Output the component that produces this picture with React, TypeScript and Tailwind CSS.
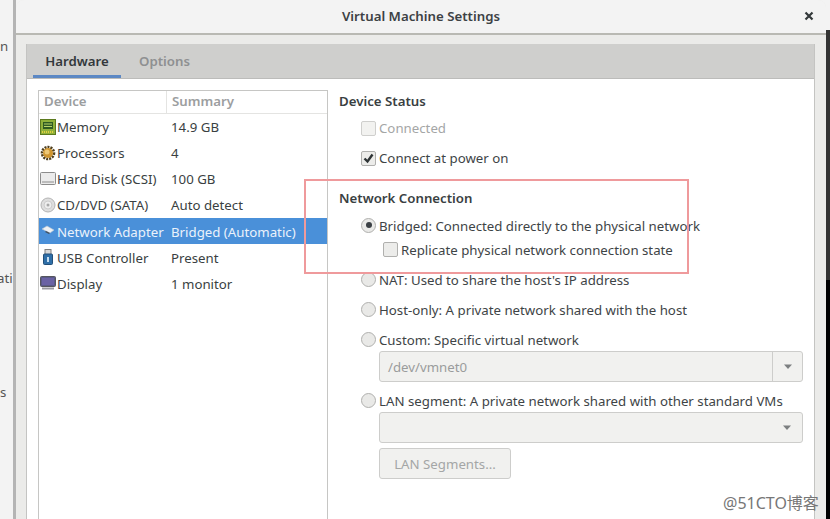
const font = { fontFamily: '"Noto Sans", "Noto Sans CJK SC", sans-serif' };

const MemoryIcon = () => (
  <svg width="16" height="16" viewBox="0 0 16 16">
    <rect x="0.5" y="0.5" width="15" height="15" fill="#8fb03a" stroke="#5c7a1e" />
    <rect x="3" y="3" width="10" height="7" fill="#2f5a22" />
    <path d="M4 5h8M4 7.5h8" stroke="#b8d468" />
    <path d="M2 13h12" stroke="#e0d040" strokeWidth="2" strokeDasharray="1 1" />
  </svg>
);

const ProcessorIcon = () => (
  <svg width="16" height="16" viewBox="0 0 16 16">
    <circle cx="8" cy="8" r="6" fill="none" stroke="#4f3e1c" strokeWidth="2.6" strokeDasharray="2 1" />
    <circle cx="8" cy="8" r="5" fill="#cf9530" />
    <circle cx="7" cy="7" r="2.5" fill="#eec877" />
  </svg>
);

const DiskIcon = () => (
  <svg width="16" height="16" viewBox="0 0 16 16">
    <rect x="0.5" y="1.5" width="15" height="12" rx="1" fill="#ebebeb" stroke="#8c8c8c" />
    <rect x="2" y="10" width="12" height="2" fill="#bcbcbc" />
  </svg>
);

const CdIcon = () => (
  <svg width="16" height="16" viewBox="0 0 16 16">
    <circle cx="8" cy="8" r="7" fill="#dedede" stroke="#b4b4b4" />
    <circle cx="8" cy="8" r="4" fill="#eeeeee" stroke="#cccccc" />
    <circle cx="8" cy="8" r="1.5" fill="#a8a8a8" />
  </svg>
);

const NetworkIcon = () => (
  <svg width="16" height="16" viewBox="0 0 16 16">
    <path d="M2 6l5-3 7 4-4 3z" fill="#eef1f4" stroke="#b8c4d0" strokeWidth="0.6" />
    <path d="M6 8l4 2-1 1-4-2z" fill="#44505c" />
  </svg>
);

const UsbIcon = () => (
  <svg width="16" height="16" viewBox="0 0 16 16">
    <rect x="5" y="0.5" width="6" height="5" fill="#d8d8d8" stroke="#808080" />
    <rect x="3.5" y="5" width="9" height="10.5" rx="1" fill="#2f6fa8" stroke="#234f78" />
    <rect x="7" y="8" width="2" height="5" fill="#c4dcf0" />
  </svg>
);

const DisplayIcon = () => (
  <svg width="16" height="16" viewBox="0 0 16 16">
    <rect x="0.5" y="1.5" width="15" height="10" rx="1" fill="#5a5a88" stroke="#56565e" />
    <rect x="2" y="3" width="12" height="7" fill="#6a62a4" />
    <path d="M2 13.5h12" stroke="#9a9aa2" strokeWidth="2" />
  </svg>
);

const rows = [
  { name: "Memory", summary: "14.9 GB", icon: <MemoryIcon />, pad: "pt-[2px]" },
  { name: "Processors", summary: "4", icon: <ProcessorIcon />, pad: "pt-[2px]" },
  { name: "Hard Disk (SCSI)", summary: "100 GB", icon: <DiskIcon />, pad: "pt-[2px]" },
  { name: "CD/DVD (SATA)", summary: "Auto detect", icon: <CdIcon />, pad: "pt-[2px]" },
  { name: "Network Adapter", summary: "Bridged (Automatic)", icon: <NetworkIcon />, selected: true, pad: "pt-[4px]" },
  { name: "USB Controller", summary: "Present", icon: <UsbIcon />, pad: "pt-[4px]" },
  { name: "Display", summary: "1 monitor", icon: <DisplayIcon />, pad: "pt-[4px]" },
];

const Radio = ({ checked }: { checked?: boolean }) => (
  <span className="flex h-[15px] w-[15px] shrink-0 items-center justify-center rounded-full border border-[#b0b0ae] bg-[#e9e9e7]">
    {checked && <span className="h-[6px] w-[6px] rounded-full bg-[#3a3f44]" />}
  </span>
);

const Check = ({ checked, disabled }: { checked?: boolean; disabled?: boolean }) => (
  <span
    className={`flex h-[15px] w-[15px] shrink-0 items-center justify-center rounded-[2px] border ${
      disabled ? "border-[#cfcfcd] bg-[#f2f2f0]" : "border-[#b0b0ae] bg-[#ececea]"
    }`}
  >
    {checked && (
      <svg width="13" height="13" viewBox="0 0 13 13">
        <path d="M2.5 6.5l3 3 5-7" fill="none" stroke="#2e3436" strokeWidth="2.4" />
      </svg>
    )}
  </span>
);

const RadioRow = ({ label, checked, className }: { label: string; checked?: boolean; className: string }) => (
  <div className={`ml-[22px] flex h-5 items-center gap-[3px] whitespace-nowrap text-[13.25px] text-[#3e4446] ${className}`}>
    <Radio checked={checked} />
    <span className="pt-[3px]">{label}</span>
  </div>
);

const Caret = () => (
  <svg width="10" height="6" viewBox="0 0 10 6">
    <path d="M1 0.5h8L5 5z" fill="#7c7f80" />
  </svg>
);

export default function App() {
  return (
    <div style={font} className="relative flex h-[519px] w-[830px] overflow-hidden bg-[#f3f3f3]">
      {/* Window behind */}
      <div className="relative w-[13px] shrink-0 overflow-hidden text-[13.25px] text-[#555]">
        <span className="absolute left-[0px] top-[37px]">n</span>
        <span className="absolute left-[-3px] top-[269px]">atic</span>
        <span className="absolute left-[0px] top-[383px]">s</span>
      </div>
      <div className="w-[3px] shrink-0 bg-[#b4b4b4]" />

      {/* Dialog */}
      <div className="flex w-[810px] shrink-0 flex-col rounded-t-[8px] bg-[#ebebe9]">
        <header className="relative box-content flex h-[32px] shrink-0 items-center justify-center rounded-t-[8px] border-b-2 border-[#b9b9b3] bg-[#f3f3f3] pt-[1px] text-[13.25px] font-semibold text-[#3c4144]">
          Virtual Machine Settings
          <svg className="absolute right-[12px] top-[11px]" width="10" height="10" viewBox="0 0 10 10">
            <path d="M1.5 1.5l7 7M8.5 1.5l-7 7" stroke="#33383a" strokeWidth="2.2" />
          </svg>
        </header>

        <div className="ml-[10px] mr-[11px] mt-[9px] flex min-h-0 flex-1 flex-col border-x border-[#c4c4c2]">
          {/* Tabs */}
          <div className="flex h-[35px] shrink-0 items-stretch border-b border-[#bcbcba] bg-[#cfcfcd] pl-[6px] text-[13.25px] font-semibold">
            <div className="flex w-[88px] items-center justify-center border-b-[3px] border-[#5c88c4] pt-[5px] text-[#33383b]">
              Hardware
            </div>
            <div className="ml-[18px] flex items-center pt-[2px] text-[#8e9091]">Options</div>
          </div>

          <div className="flex min-h-0 flex-1 bg-white pl-[11px] pt-[11px]">
            {/* Device list */}
            <div className="h-[440px] w-[290px] shrink-0 border border-[#c6c6c4] text-[13.25px] text-[#3a3f42]">
              <div className="flex h-[23px] border-b border-[#e4e4e2] font-semibold text-[#9c9e9f]">
                <div className="flex w-[128px] items-center border-r border-[#e4e4e2] pl-[5px]">Device</div>
                <div className="flex items-center pl-[5px]">Summary</div>
              </div>
              {rows.map((row) => (
                <div
                  key={row.name}
                  className={`flex h-[26px] items-center ${row.selected ? "bg-[#4a90d9] text-[#eaf2fb]" : ""}`}
                >
                  <div className="flex w-[132px] shrink-0 items-center gap-[1px] whitespace-nowrap pl-[1px]">
                    {row.icon}
                    <span className={row.pad}>{row.name}</span>
                  </div>
                  <span className={`whitespace-nowrap ${row.pad}`}>{row.summary}</span>
                </div>
              ))}
            </div>

            {/* Settings */}
            <div className="ml-[11px] flex-1 pr-[11px]">
              <h2 className="flex h-5 items-center pt-[4px] text-[13.25px] font-semibold text-[#3a3f42]">Device Status</h2>
              <div className="ml-[22px] mt-[8px] flex h-5 items-center gap-[3px] text-[13.25px] text-[#a4a6a6]">
                <Check disabled />
                <span className="pt-[2px]">Connected</span>
              </div>
              <div className="ml-[22px] mt-[10px] flex h-5 items-center gap-[3px] text-[13.25px] text-[#3e4446]">
                <Check checked />
                <span className="pt-[2px]">Connect at power on</span>
              </div>
              <h2 className="mt-[19px] flex h-5 items-center pt-[4px] text-[13.25px] font-semibold text-[#3a3f42]">
                Network Connection
              </h2>
              <RadioRow className="mt-[8px]" checked label="Bridged: Connected directly to the physical network" />
              <div className="ml-[44px] mt-[4px] flex h-5 items-center gap-[3px] text-[13.25px] text-[#3e4446]">
                <Check />
                <span className="pt-[3px]">Replicate physical network connection state</span>
              </div>
              <RadioRow className="mt-[10px]" label="NAT: Used to share the host's IP address" />
              <RadioRow className="mt-[10px]" label="Host-only: A private network shared with the host" />
              <RadioRow className="mt-[10px]" label="Custom: Specific virtual network" />

              <div className="ml-[40px] mt-[2px] flex h-[31px] items-stretch rounded-[3px] border border-[#cdcdcb] bg-[#f1f1ef] text-[13.25px] text-[#9a9c9c]">
                <div className="flex flex-1 items-center pl-[8px] pt-[2px]">/dev/vmnet0</div>
                <div className="flex w-[30px] items-center justify-center border-l border-[#cdcdcb]">
                  <Caret />
                </div>
              </div>

              <RadioRow className="mt-[8px]" label="LAN segment: A private network shared with other standard VMs" />

              <div className="ml-[40px] mt-[2px] flex h-[31px] items-center justify-end rounded-[3px] border border-[#cdcdcb] bg-[#f1f1ef] pr-[10px]">
                <Caret />
              </div>

              <div className="ml-[40px] mt-[5px] flex h-[31px] w-[132px] items-center justify-center rounded-[3px] border border-[#cdcdcb] bg-[#f1f1ef] pt-[2px] text-[13.25px] text-[#a4a6a6]">
                LAN Segments...
              </div>
            </div>
          </div>
        </div>
      </div>

      {/* Desktop behind the right edge */}
      <div className="flex flex-1 flex-col">
        <div className="h-[30px] bg-[#f3f3f3]" />
        <div className="h-[250px] bg-[#333333]" />
        <div className="flex-1 bg-black" />
      </div>

      {/* Annotation */}
      <div className="absolute left-[304px] top-[179px] h-[95px] w-[385px] border-2 border-[#ef9a9c]" />

      {/* Watermark */}
      <div className="absolute left-[723px] top-[491px] text-[16px] text-[#777777]">@51CTO博客</div>
    </div>
  );
}
